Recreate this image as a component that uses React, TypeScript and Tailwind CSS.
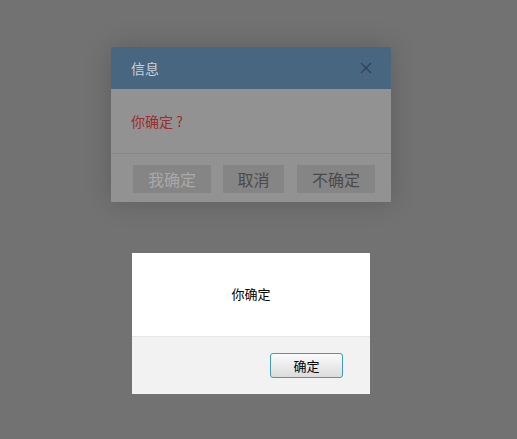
export default function App() {
  const font = { fontFamily: '"Noto Sans CJK SC", "Noto Sans", sans-serif' };
  return (
    <div className="w-[517px] h-[439px] bg-[#727272] overflow-hidden" style={font}>
      <div className="flex flex-col pt-[47px]">
        <div className="ml-[111px] w-[280px] shadow-[0_0_24px_rgba(0,0,0,0.18)]">
          <div className="h-[42px] bg-[#48667f] flex items-center justify-between pl-[20px] pr-[18px]">
            <span className="text-[14px] text-[#c9d2db]">信息</span>
            <svg width="12" height="12" viewBox="0 0 12 12" className="mr-[1px]">
              <path d="M1 1 L11 11 M11 1 L1 11" stroke="#2f4259" strokeWidth="1.4" fill="none" />
            </svg>
          </div>
          <div className="h-[64px] bg-[#929292] flex items-center pl-[20px]">
            <span className="text-[14px] text-[#9e2b2b]">你确定 ?</span>
          </div>
          <div className="h-[49px] bg-[#929292] border-t border-[#868686] flex items-center pl-[22px] pt-[1px]">
            <div className="w-[78px] h-[28px] bg-[#858585] flex items-center justify-center text-[16px] text-[#a9a9a9]">我确定</div>
            <div className="ml-[12px] w-[61px] h-[28px] bg-[#858585] flex items-center justify-center text-[16px] text-[#4a4a4a]">取消</div>
            <div className="ml-[13px] w-[78px] h-[28px] bg-[#858585] flex items-center justify-center text-[16px] text-[#4a4a4a]">不确定</div>
          </div>
        </div>
        <div className="ml-[132px] mt-[51px] w-[238px]">
          <div className="h-[83px] bg-white flex items-center justify-center pb-[2px]">
            <span className="text-[13px] text-black">你确定</span>
          </div>
          <div className="h-[58px] bg-[#f2f2f2] border-t border-[#e6e6e6] flex items-center justify-end pr-[27px]">
            <div className="w-[73px] h-[25px] rounded-[3px] border border-[#3f9dbf] bg-gradient-to-b from-[#fbfbfb] to-[#dcdcdc] flex items-center justify-center text-[13px] text-black">确定</div>
          </div>
        </div>
      </div>
    </div>
  );
}
